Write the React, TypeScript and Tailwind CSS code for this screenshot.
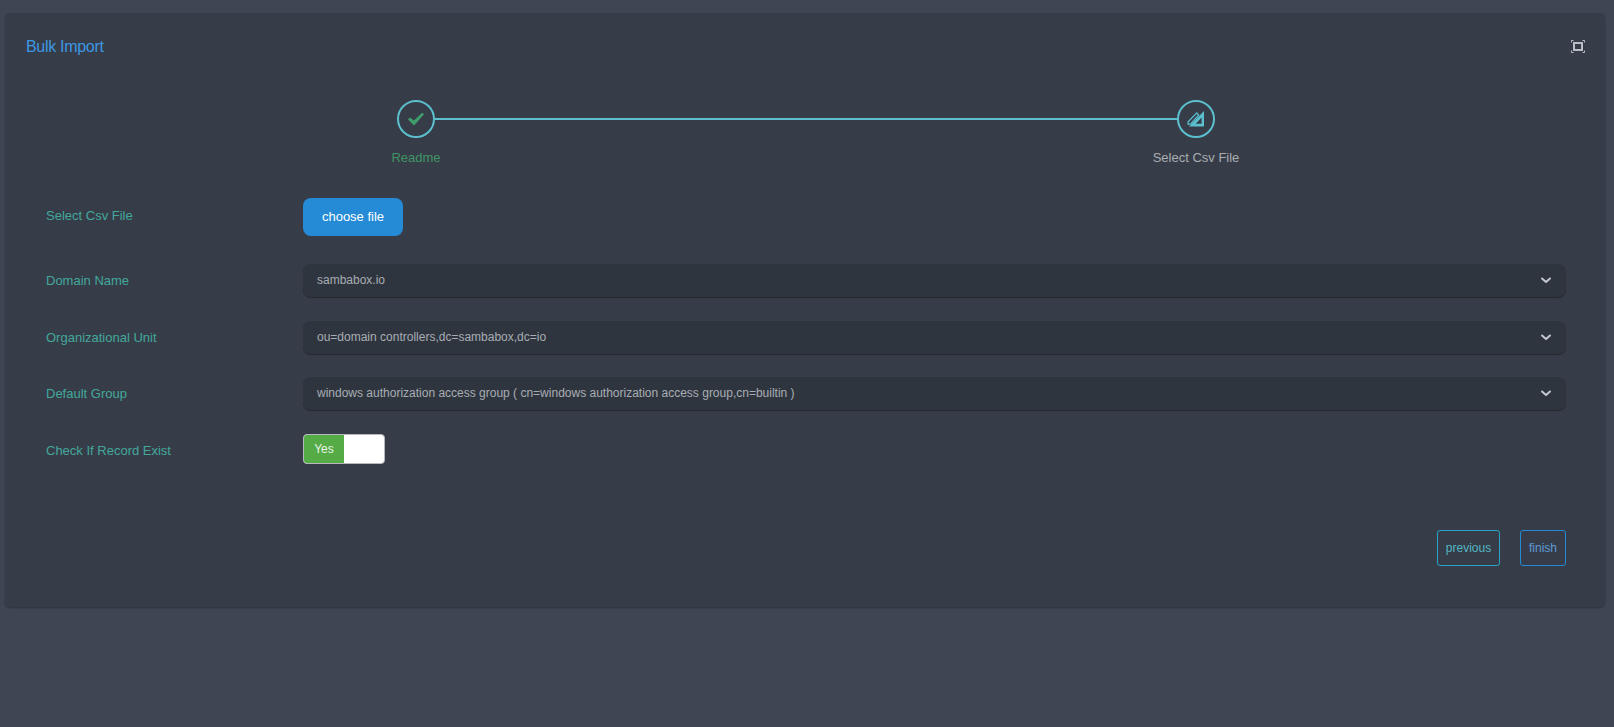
const font = 'font-["Liberation_Sans",Arial,sans-serif]'

const selects = [
  { label: 'Domain Name', value: 'sambabox.io', gap: 'mt-0' },
  { label: 'Organizational Unit', value: 'ou=domain controllers,dc=sambabox,dc=io', gap: 'mt-[24px]' },
  { label: 'Default Group', value: 'windows authorization access group ( cn=windows authorization access group,cn=builtin )', gap: 'mt-[23px]' },
]

function Chevron() {
  return (
    <svg width="12" height="12" viewBox="0 0 12 12" fill="none" stroke="#c3c8ce" strokeWidth="2" strokeLinecap="round" strokeLinejoin="round">
      <path d="M2 4.5 L6 8 L10 4.5" />
    </svg>
  )
}

function FullscreenIcon() {
  return (
    <svg className="-mt-[2px] mr-[2px]" width="14" height="13" viewBox="0 0 14 13" fill="none" stroke="#b9bec5">
      <path d="M0.5 2.5 V0.5 H2.5 M11.5 0.5 H13.5 V2.5 M0.5 10.5 V12.5 H2.5 M11.5 12.5 H13.5 V10.5" strokeWidth="1" />
      <rect x="3" y="3" width="8" height="7" strokeWidth="2" />
    </svg>
  )
}

function RulerPencilIcon() {
  return (
    <svg width="18" height="18" viewBox="0 0 18 18" fill="#5bbfce">
      <path fillRule="evenodd" d="M17 1 V16.5 H2 Z M14.6 7.5 L8.6 13.8 H14.6 Z" />
      <path d="M0.5 11.5 V15 L4 14.5 L12.5 5 L9.8 2 Z M1.8 12 L9.8 3.8 L10.8 5 L3.3 13.4 L1.8 13.6 Z" fillRule="evenodd" />
    </svg>
  )
}

export default function App() {
  return (
    <div className={`${font} min-h-[727px] bg-[#3e4553] pt-[13px] pl-[5px] pr-[9px]`}>
      <div className="h-[594px] rounded-[5px] bg-[#373d48] shadow-[0_1px_2px_rgba(0,0,0,0.25)]">
        <div className="flex items-center justify-between pl-[21px] pr-[18px] pt-[25px]">
          <h1 className="text-[16px] leading-[18px] tracking-[-0.3px] text-[#3c97e3]">Bulk Import</h1>
          <FullscreenIcon />
        </div>

        <div className="ml-[392px] mr-[390px] mt-[44px] flex">
          <div className="flex w-[38px] flex-col items-center">
            <div className="flex h-[38px] w-[38px] items-center justify-center rounded-full border-2 border-[#5bbfce]">
              <svg width="16" height="14" viewBox="0 0 16 14" fill="#3f9e6b">
                <path d="M0 7.5 L2 5.5 L6 8.6 L14.2 0.8 L16 2.2 L6 13.5 Z" />
              </svg>
            </div>
            <span className="mt-[10px] whitespace-nowrap text-[13px] leading-[20px] text-[#3f9565]">Readme</span>
          </div>
          <div className="mt-[18px] h-[2px] flex-1 bg-[#5bbfce]" />
          <div className="flex w-[38px] flex-col items-center">
            <div className="flex h-[38px] w-[38px] items-center justify-center rounded-full border-2 border-[#5bbfce]">
              <RulerPencilIcon />
            </div>
            <span className="mt-[10px] whitespace-nowrap text-[13px] leading-[20px] text-[#a8adb3]">Select Csv File</span>
          </div>
        </div>

        <div className="mt-[30px] pl-[41px] pr-[39px]">
          <div className="flex items-center">
            <label className="w-[257px] pb-[2px] text-[13px] text-[#42a89c]">Select Csv File</label>
            <button className="h-[38px] w-[100px] rounded-[8px] bg-[#258bd6] text-[13px] text-white">choose file</button>
          </div>

          <div className="mt-[28px] flex flex-col">
            {selects.map((s) => (
              <div key={s.label} className={`${s.gap} flex items-center`}>
                <label className="w-[257px] pt-[1px] text-[13px] text-[#42a89c]">{s.label}</label>
                <div className="flex h-[33px] flex-1 items-center justify-between rounded-[8px] bg-[#2f353f] pl-[14px] pr-[14px] pb-[2px] text-[12px] text-[#a8adb3] shadow-[0_1px_1px_rgba(0,0,0,0.35)]">
                  <span>{s.value}</span>
                  <Chevron />
                </div>
              </div>
            ))}
          </div>

          <div className="mt-[24px] flex items-center">
            <label className="w-[257px] pt-[4px] text-[13px] text-[#42a89c]">Check If Record Exist</label>
            <div className="flex h-[30px] w-[82px] overflow-hidden rounded-[4px] border border-[#b5b9be] bg-white">
              <div className="flex w-[40px] items-center justify-center bg-[#55ab46] text-[12px] text-[#e8f3e6]">Yes</div>
            </div>
          </div>

          <div className="mt-[66px] flex justify-end gap-[20px]">
            <button className="h-[36px] w-[63px] rounded-[3px] border border-[#27a5c5] text-[12px] text-[#52b6c4]">previous</button>
            <button className="h-[36px] w-[46px] rounded-[3px] border border-[#258bd6] text-[12px] text-[#5c9bd8]">finish</button>
          </div>
        </div>
      </div>
    </div>
  )
}
